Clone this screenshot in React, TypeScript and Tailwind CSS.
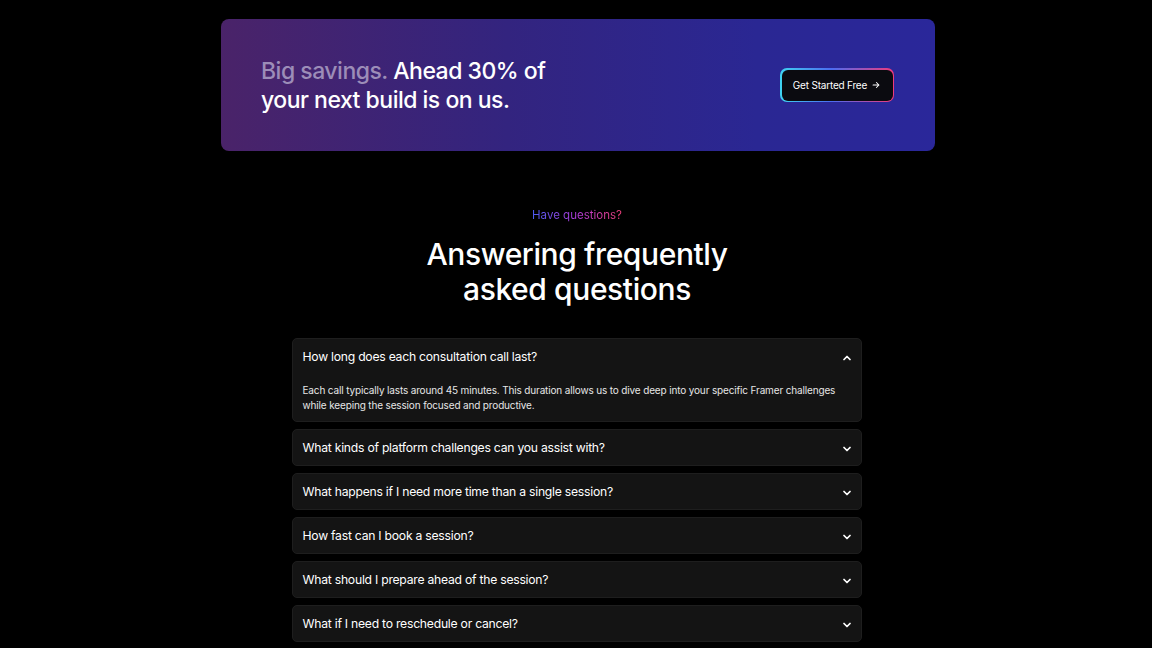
import React, { useState } from 'react';

const faqs = [
  {
    q: 'How long does each consultation call last?',
    a: 'Each call typically lasts around 45 minutes. This duration allows us to dive deep into your specific Framer challenges while keeping the session focused and productive.',
  },
  { q: 'What kinds of platform challenges can you assist with?', a: '' },
  { q: 'What happens if I need more time than a single session?', a: '' },
  { q: 'How fast can I book a session?', a: '' },
  { q: 'What should I prepare ahead of the session?', a: '' },
  { q: 'What if I need to reschedule or cancel?', a: '' },
];

function Chevron({ up }: { up: boolean }) {
  return (
    <svg width="12" height="12" viewBox="0 0 24 24" fill="none" stroke="white" strokeWidth="3.5" strokeLinecap="round" strokeLinejoin="round">
      {up ? <path d="M6 15l6-6 6 6" /> : <path d="M6 9l6 6 6-6" />}
    </svg>
  );
}

export default function App() {
  const [open, setOpen] = useState(0);
  return (
    <div className="min-h-[648px] bg-black text-white font-['Inter','Noto_Sans',sans-serif] pt-[19px]">
      {/* Promo banner */}
      <div className="flex justify-center pl-1">
        <section className="w-[714px] h-[132px] rounded-lg bg-[linear-gradient(90deg,#4a2369_0%,#33247f_40%,#2a2793_75%,#2a279a_100%)] flex items-center justify-between pl-10 pr-[41px]">
          <h2 className="text-[23px] leading-[29px] font-medium tracking-[-0.5px] pt-[2px]">
            <span className="text-[#9c8db8]">Big savings.</span> Ahead 30% of
            <br />
            your next build is on us.
          </h2>
          <div className="rounded-[7px] p-[1.5px] bg-[linear-gradient(90deg,#3fd3f0_0%,#4b6cf0_45%,#f03a7a_100%)]">
            <button className="h-[31px] w-[111px] rounded-[6px] bg-[#0b0b10] text-[10px] tracking-[-0.2px] text-white flex items-center justify-center gap-1">
              Get Started Free
              <svg width="10" height="10" viewBox="0 0 24 24" fill="none" stroke="white" strokeWidth="2.5" strokeLinecap="round" strokeLinejoin="round">
                <path d="M5 12h14M13 6l6 6-6 6" />
              </svg>
            </button>
          </div>
        </section>
      </div>

      {/* FAQ heading */}
      <div className="mt-[56px] flex flex-col items-center pl-[2px]">
        <p className="text-[11.5px] leading-4 bg-[linear-gradient(90deg,#4a5cf0,#b03ad8_50%,#f0407a)] bg-clip-text text-transparent">
          Have questions?
        </p>
        <h1 className="mt-[14px] text-center text-[30px] leading-[35px] font-medium tracking-[-0.4px]">
          Answering frequently
          <br />
          asked questions
        </h1>
      </div>

      {/* FAQ list */}
      <div className="mx-auto mt-[31px] w-[571px] flex flex-col gap-[7px] pl-[1px]">
        {faqs.map((f, i) => {
          const isOpen = open === i;
          return (
            <div key={i} className="rounded-[5px] bg-[#141414] border border-[#1e1e1e]">
              <button
                onClick={() => setOpen(isOpen ? -1 : i)}
                className="w-full h-[35px] pt-[2px] flex items-center justify-between pl-[10px] pr-[8px] text-left"
              >
                <span className="text-[12.2px] text-white tracking-[-0.25px]">{f.q}</span>
                <Chevron up={isOpen} />
              </button>
              {isOpen && (
                <p className="pl-[10px] pr-2 pt-[9px] pb-[8px] text-[10px] leading-[15px] text-[#e6e6e6] tracking-[-0.15px]">
                  {f.a}
                </p>
              )}
            </div>
          );
        })}
      </div>
    </div>
  );
}
